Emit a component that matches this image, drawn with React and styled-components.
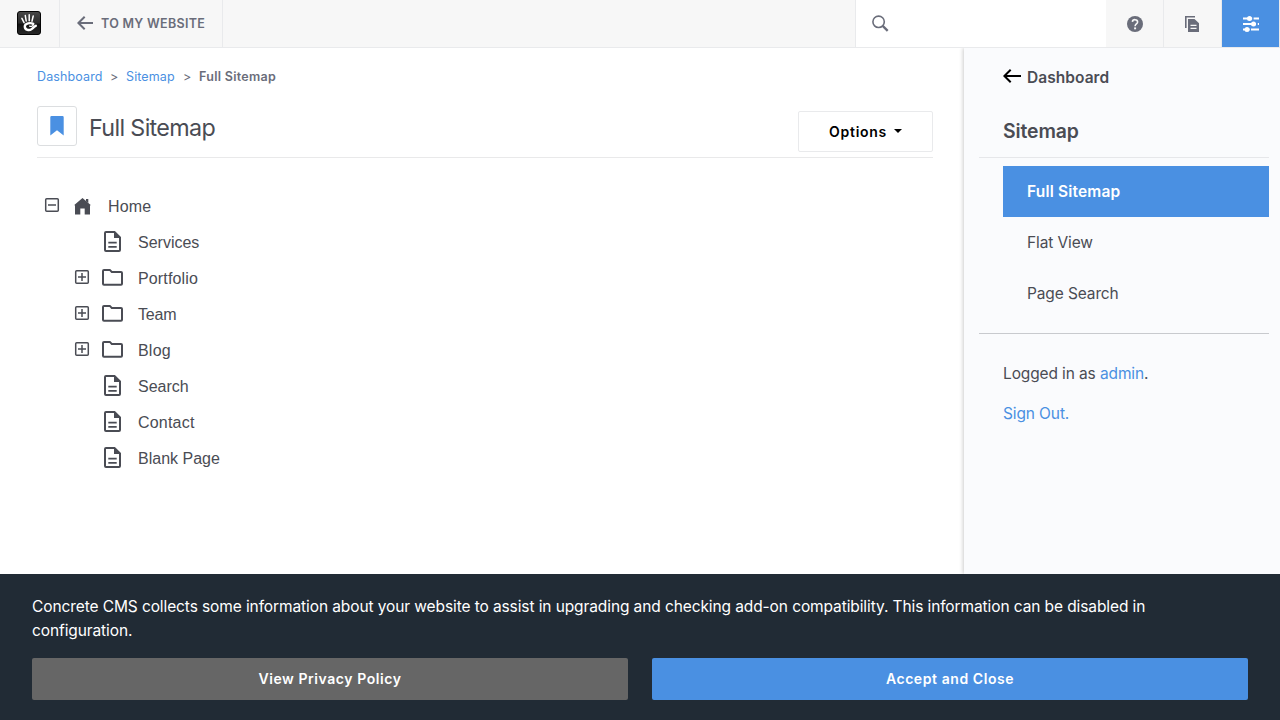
import React from 'react';
import styled, { createGlobalStyle } from 'styled-components';

const GlobalStyle = createGlobalStyle`
  * { box-sizing: border-box; }
  body { margin: 0; background: #fff; overflow: hidden; font-family: Inter, 'Liberation Sans', sans-serif; color: #4a4c54; -webkit-font-smoothing: antialiased; }
  svg { display: block; flex: none; }
  a { color: #4a90e2; text-decoration: none; }
`;

const Page = styled.div`
  height: 720px; display: flex; flex-direction: column; overflow: hidden;
`;
const Toolbar = styled.header`
  height: 48px; flex: none; display: flex; background: #f7f7f7; border-bottom: 1px solid #e9eaec;
`;
const LogoCell = styled.div`
  width: 60px; padding: 11px 0 0 17px; border-right: 1px solid #e9eaec;
`;
const BackCell = styled.div`
  width: 163px; padding: 0 0 1px 17px; display: flex; align-items: center; gap: 8px;
  border-right: 1px solid #e9eaec; color: #6a6d7a; font-size: 12.5px; font-weight: 600;
  letter-spacing: 0.3px; white-space: nowrap;
`;
const SearchCell = styled.div`
  width: 251px; margin-left: auto; border-left: 1px solid #e9eaec; background: #fff; padding: 15px 0 0 16px;
`;
const ToolCell = styled.div`
  width: 58px; display: flex; align-items: center; justify-content: center;
  border-right: 1px solid #e9eaec; background: ${p => (p.$active ? '#4a90e2' : 'transparent')};
`;
const Body = styled.div`flex: 1; min-height: 0; display: flex;`;
const Main = styled.main`width: 964px; padding: 19px 31px 0 37px;`;
const Breadcrumb = styled.nav`
  height: 20px; display: flex; align-items: center; font-size: 12.5px; line-height: 20px;
`;
const Crumb = styled.span`
  width: ${p => p.$w}px; white-space: nowrap; letter-spacing: ${p => (p.$current ? 0.3 : 0.12)}px;
  font-weight: ${p => (p.$current ? 600 : 400)}; color: ${p => (p.$link ? '#4a90e2' : '#6a6d7a')};
`;
const TitleBar = styled.div`
  margin-top: 19px; height: 52px; display: flex; border-bottom: 1px solid #e9e9ea;
`;
const BookmarkBox = styled.div`
  width: 40px; height: 40px; border: 1px solid #dcdee0; border-radius: 3px; display: flex; align-items: center; justify-content: center;
`;
const Title = styled.h1`
  margin: 7px 0 0 12px; font-size: 23.3px; line-height: 30px; font-weight: 400; letter-spacing: -0.65px;
`;
const OptionsButton = styled.button`
  margin: 5px 0 0 auto; width: 135px; height: 41px; border: 1px solid #e9eaec; border-radius: 2px; background: #fff;
  padding: 0; display: flex; align-items: center; justify-content: center; gap: 7px;
  font: 600 14px Inter, sans-serif; letter-spacing: 0.7px; color: #000;
`;
const Caret = styled.span`
  border: 4px solid transparent; border-top-color: #000; border-bottom: 0; margin-top: -2px;
`;
const Tree = styled.div`padding-top: 30px;`;
const TreeRow = styled.div`
  height: 36px; display: flex; align-items: center; padding-left: ${p => (p.$child ? 37 : 7)}px;
  font: 16px/18px 'Liberation Sans', sans-serif;
`;
const Expander = styled.span`width: 26px; padding-bottom: 2px;`;
const NodeIcon = styled.span`
  width: 25px; height: 22px; display: flex; align-items: center; justify-content: center;
  margin-top: ${p => (p.$raised ? -3 : -1)}px;
`;
const NodeLabel = styled.span`margin-left: 13px; margin-top: 1px; letter-spacing: ${p => p.$track || 0}px;`;

const Sidebar = styled.aside`
  flex: 1; background: #fafbfd; box-shadow: -1px 0 4px rgba(0,0,0,.2); clip-path: inset(0 0 0 -8px); padding: 18px 11px 0 15px; font-size: 15.5px;
`;
const SideBack = styled.div`
  height: 22px; padding-left: 24px; display: flex; align-items: center; gap: 6px; font-weight: 600; letter-spacing: 0.05px;
`;
const BackIcon = styled.span`padding-bottom: 2px;`;
const SideTitle = styled.h2`
  margin: 0; height: 70px; padding: 31px 0 0 24px; border-bottom: 1px solid #e6e7ea;
  font-size: 19.4px; line-height: 24px; font-weight: 600; letter-spacing: -0.1px;
`;
const SideList = styled.div`padding: 8px 0 14px 24px;`;
const SideItem = styled.div`
  height: 51px; padding-left: 24px; line-height: 51px; letter-spacing: ${p => (p.$active ? 0.18 : -0.12)}px;
  background: ${p => (p.$active ? '#4a90e2' : 'transparent')}; color: ${p => (p.$active ? '#fff' : 'inherit')};
  font-weight: ${p => (p.$active ? 600 : 400)};
`;
const Account = styled.div`border-top: 1px solid #c8cace; padding: 28px 0 0 24px;`;
const AccountLine = styled.p`margin: 0 0 16px; line-height: 24px; letter-spacing: -0.12px;`;

const Notice = styled.footer`
  height: 146px; flex: none; background: #212b35; color: #fff; padding: 21px 32px 0;
`;
const NoticeText = styled.p`
  margin: 0 0 15px; width: 1160px; font-size: 15.5px; line-height: 24px; letter-spacing: -0.1px;
`;
const NoticeActions = styled.div`display: grid; grid-template-columns: 1fr 1fr; gap: 24px;`;
const NoticeButton = styled.button`
  height: 42px; border: 0; border-radius: 2px; color: #fff; background: ${p => (p.$primary ? '#4a90e2' : '#666')};
  padding: 0 0 1px; font: 600 14px Inter, sans-serif; letter-spacing: 0.57px;
`;

const Logo = () => (
  <svg width="24" height="24" viewBox="0 0 24 24">
    <defs><linearGradient id="ink" x1="0" y1="0" x2="0" y2="1"><stop offset="0" stopColor="#484848" /><stop offset=".5" stopColor="#2a2a2a" /><stop offset=".55" stopColor="#111" /><stop offset="1" stopColor="#292929" /></linearGradient></defs>
    <rect x=".5" y=".5" width="23" height="23" rx="2.5" fill="url(#ink)" stroke="#050505" />
    <g stroke="#fff" strokeLinecap="round" fill="none">
      <path d="M4.9 7.4l2.2 4.2M8.3 4.6l.9 5.4M12.2 3.7v6M16.2 5l-1.2 5.2" strokeWidth="1.5" />
      <path d="M16.3 12.8C13.6 11.5 7.8 12 7.8 15.6C7.9 19.2 12.3 19.8 14.6 18.1C16.1 17 17 15.5 18.8 14.8" strokeWidth="2.4" />
      <path d="M16.6 13.2C16.4 14.6 14.6 15.8 12.6 15.2" strokeWidth="1.3" />
    </g>
  </svg>
);
const Arrow = ({ color, w = 16, h = 14 }) => (
  <svg width={w} height={h} viewBox={`0 0 ${w} ${h}`} fill="none" stroke={color} strokeWidth="2">
    <path d={`M${w} ${h / 2}H1.5M${h / 2 + 0.7} .8L1.4 ${h / 2}l${h / 2 - 0.7} ${h / 2 - 0.8}`} />
  </svg>
);
const SearchIcon = () => (
  <svg width="17" height="17" viewBox="0 0 17 17" fill="none" stroke="#6a6d7a"><circle cx="6.6" cy="6.8" r="5.7" strokeWidth="1.6" /><path d="M10.7 10.9l5 5" strokeWidth="2.3" /></svg>
);
const HelpIcon = () => (
  <svg width="16" height="16" viewBox="0 0 16 16"><circle cx="8" cy="8" r="8" fill="#6a6d7a" /><path d="M5.4 5.8c.3-3 5.2-2.7 5.2.1 0 2-2.5 2-2.5 4.3" fill="none" stroke="#f7f7f7" strokeWidth="1.6" /><path d="M7.1 11.4h2V13.3h-2z" fill="#f7f7f7" /></svg>
);
const PagesIcon = () => (
  <svg width="16" height="16" viewBox="0 0 16 16"><path d="M.8 12V.8H10" fill="none" stroke="#6a6d7a" strokeWidth="1.6" /><path d="M3 3h6.5L14 7.2V16H3z" fill="#6a6d7a" /><path d="M5.5 9.3h6M5.5 12.4h6" stroke="#f7f7f7" strokeWidth="1.3" /></svg>
);
const SlidersIcon = () => (
  <svg width="16" height="16" viewBox="0 0 16 16" stroke="#fff" strokeWidth="1.8"><path d="M0 2.5h9.2M10.6 2.5H16M0 8h13M14.8 8H16M0 13.5h6.6M8 13.5h8" /><g fill="#fff" stroke="none"><circle cx="6.5" cy="2.5" r="2.5" /><circle cx="10.5" cy="8" r="2.5" /><circle cx="4" cy="13.5" r="2.5" /></g></svg>
);
const Bookmark = () => (
  <svg width="14" height="20" viewBox="0 0 14 20"><path d="M1.5 0h11q1.2 0 1.2 1.2V19.5L7 14.2.3 19.5V1.2Q.3 0 1.5 0z" fill="#4a90e2" /></svg>
);
const ExpandBox = ({ open }) => (
  <svg width="16" height="16" viewBox="0 0 16 16" fill="none" stroke="#4a4c54"><rect x="1.7" y="1.7" width="12.6" height="12.6" rx="1" strokeWidth="1.5" /><path d={open ? 'M4 8h8' : 'M4 8h8M8 4v8'} strokeWidth="1.5" /></svg>
);
const icons = {
  home: <svg width="17" height="18" viewBox="0 0 17 18"><path d="M8.5 1L17 8.3H16V17.5h-5.3v-6H6.3v6H1V8.3H0z" fill="#4a4c54" /><path d="M12 2h2.3v4L12 4.2z" fill="#4a4c54" /></svg>,
  page: <svg width="17" height="22" viewBox="0 0 17 22" fill="none" stroke="#4a4c54" strokeWidth="2"><path d="M10.5 2H2q-1 0-1 1v17q0 1 1 1h13q1 0 1-1V7.5z" /><path d="M10 1v7h6.8z" fill="#4a4c54" stroke="none" /><path d="M4.3 12.7h8.4M4.3 16.8h8.4" strokeWidth="1.8" /></svg>,
  folder: <svg width="21" height="18" viewBox="0 0 21 18" fill="none" stroke="#4a4c54" strokeWidth="2"><path d="M2 1.9h5.8l2 2H19q1 0 1 1v10.8q0 1-1 1H2q-1 0-1-1V3.1q0-1.2 1-1.2z" /></svg>,
};

const nodes = [
  { label: 'Home', icon: 'home', open: true, root: true, track: 0.15 },
  { label: 'Services', icon: 'page' },
  { label: 'Portfolio', icon: 'folder', track: 0.15 },
  { label: 'Team', icon: 'folder', track: -0.2 },
  { label: 'Blog', icon: 'folder', track: 0.2 },
  { label: 'Search', icon: 'page' },
  { label: 'Contact', icon: 'page', track: 0.2 },
  { label: 'Blank Page', icon: 'page' },
];

export default function App() {
  return (
    <Page>
      <GlobalStyle />
      <Toolbar>
        <LogoCell><Logo /></LogoCell>
        <BackCell><Arrow color="#6a6d7a" />TO MY WEBSITE</BackCell>
        <SearchCell><SearchIcon /></SearchCell>
        <ToolCell><HelpIcon /></ToolCell>
        <ToolCell><PagesIcon /></ToolCell>
        <ToolCell $active><SlidersIcon /></ToolCell>
      </Toolbar>
      <Body>
        <Main>
          <Breadcrumb>
            <Crumb $w={73} $link>Dashboard</Crumb><Crumb $w={16}>&gt;</Crumb>
            <Crumb $w={57} $link>Sitemap</Crumb><Crumb $w={16}>&gt;</Crumb>
            <Crumb $w={90} $current>Full Sitemap</Crumb>
          </Breadcrumb>
          <TitleBar>
            <BookmarkBox><Bookmark /></BookmarkBox>
            <Title>Full Sitemap</Title>
            <OptionsButton>Options<Caret /></OptionsButton>
          </TitleBar>
          <Tree>
            {nodes.map(n => (
              <TreeRow key={n.label} $child={!n.root}>
                <Expander>{(n.root || n.icon === 'folder') && <ExpandBox open={n.open} />}</Expander>
                <NodeIcon $raised={!n.root}>{icons[n.icon]}</NodeIcon>
                <NodeLabel $track={n.track}>{n.label}</NodeLabel>
              </TreeRow>
            ))}
          </Tree>
        </Main>
        <Sidebar>
          <SideBack><BackIcon><Arrow color="#000" w={18} h={14} /></BackIcon>Dashboard</SideBack>
          <SideTitle>Sitemap</SideTitle>
          <SideList>
            <SideItem $active>Full Sitemap</SideItem>
            <SideItem>Flat View</SideItem>
            <SideItem>Page Search</SideItem>
          </SideList>
          <Account>
            <AccountLine>Logged in as <a>admin</a>.</AccountLine>
            <AccountLine><a>Sign Out.</a></AccountLine>
          </Account>
        </Sidebar>
      </Body>
      <Notice>
        <NoticeText>Concrete CMS collects some information about your website to assist in upgrading and checking add-on compatibility. This information can be disabled in configuration.</NoticeText>
        <NoticeActions>
          <NoticeButton>View Privacy Policy</NoticeButton>
          <NoticeButton $primary>Accept and Close</NoticeButton>
        </NoticeActions>
      </Notice>
    </Page>
  );
}
